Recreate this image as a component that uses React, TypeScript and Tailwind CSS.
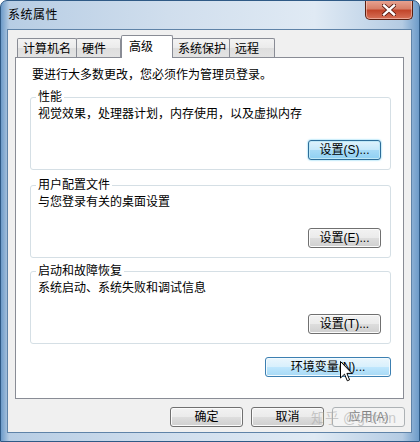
import type { ReactNode } from "react";

type BtnProps = {
  children: ReactNode;
  variant?: "normal" | "focus" | "hover" | "disabled";
  className?: string;
};

function Btn({ children, variant = "normal", className = "" }: BtnProps) {
  const styles = {
    normal:
      "border-[#707070] text-black bg-[linear-gradient(#f2f2f2_0%,#ebebeb_48%,#dddddd_52%,#cfcfcf_100%)] shadow-[inset_0_0_0_1px_#fbfbfb]",
    focus:
      "border-[#2c6d99] text-black bg-[linear-gradient(#dff2fc_0%,#c6e9fb_48%,#a6daf6_52%,#8fd0f3_100%)] shadow-[inset_0_0_0_1px_#bfe8f7,0_0_2px_#48c3f0]",
    hover:
      "border-[#3c7fb1] text-black bg-[linear-gradient(#eaf6fd_0%,#d9f0fc_48%,#bee6fd_52%,#a7d9f5_100%)] shadow-[inset_0_0_0_1px_#f2fafe]",
    disabled:
      "border-[#adb2b5] text-[#838383] bg-[#f4f4f4]",
  }[variant];
  return (
    <div
      className={`h-[20px] rounded-[3px] border flex items-center justify-center text-[12px] leading-none ${styles} ${className}`}
    >
      {children}
    </div>
  );
}

function Group({
  title,
  desc,
  button,
  className = "",
}: {
  title: string;
  desc: string;
  button: ReactNode;
  className?: string;
}) {
  return (
    <div
      className={`border border-[#d5dfe5] rounded-[3px] pl-[7px] pr-[9px] pb-[9px] flex flex-col ${className}`}
    >
      <span className="block w-fit -mt-[9px] -ml-[2px] px-[2px] bg-white leading-[16px]">
        {title}
      </span>
      <div className="leading-[16px] mt-px">{desc}</div>
      <div className="flex justify-end mt-[18px]">{button}</div>
    </div>
  );
}

const tabs = [
  { label: "计算机名", w: "w-[60px]" },
  { label: "硬件", w: "w-[45px]" },
  { label: "高级", w: "w-[52px]", active: true },
  { label: "系统保护", w: "w-[58px]" },
  { label: "远程", w: "w-[46px]" },
];

export default function App() {
  return (
    <div className="w-[420px] h-[442px] relative flex flex-col overflow-hidden rounded-t-[7px] border border-[#2f5a86] bg-[linear-gradient(90deg,#6d9bc9_0%,#b7cde4_2%,#d0deed_40%,#e0eaf4_75%,#b4cbe3_96%,#6d9bc9_100%)] font-['Liberation_Sans','Noto_Sans_CJK_SC',sans-serif] text-[12px] text-black">
      {/* title bar */}
      <div className="h-[28px] flex items-center pl-[7px] text-[12px] tracking-[0.5px]">
        系统属性
      </div>
      <div className="absolute -top-px right-[6px] w-[48px] h-[20px] rounded-b-[5px] border border-[#5b1f10] border-t-0 bg-[linear-gradient(#e9a695_0%,#d88069_45%,#c2462b_55%,#d77158_100%)] shadow-[inset_0_0_0_1px_rgba(255,220,210,0.5)] flex items-center justify-center">
        <svg width="14" height="12" viewBox="0 0 14 12">
          <path
            d="M2 1.5 L12 10.5 M12 1.5 L2 10.5"
            stroke="#5a1a10"
            strokeWidth="4.2"
            strokeLinecap="square"
          />
          <path
            d="M2 1.5 L12 10.5 M12 1.5 L2 10.5"
            stroke="#ffffff"
            strokeWidth="2.4"
            strokeLinecap="square"
          />
        </svg>
      </div>

      {/* client */}
      <div className="ml-[6px] mr-[7px] flex-1 border border-[#5f83a8] bg-[#f0f0f0] flex flex-col">
        <div className="pt-[5px] pl-[8px] flex items-end h-[27px]">
          {tabs.map((t) =>
            t.active ? (
              <div
                key={t.label}
                className={`${t.w} h-[23px] -mb-px relative z-10 border border-b-0 border-[#898c95] bg-white rounded-t-[2px] pl-[7px] pt-[3px] leading-[16px]`}
              >
                {t.label}
              </div>
            ) : (
              <div
                key={t.label}
                className={`${t.w} h-[19px] border border-b-0 border-[#898c95] -ml-px first:ml-px rounded-t-[2px] bg-[linear-gradient(#f3f3f3_0%,#ebebeb_50%,#dedede_52%,#e3e3e3_100%)] pl-[5px] pt-[2px] leading-[16px]`}
              >
                {t.label}
              </div>
            )
          )}
        </div>

        <div className="ml-[7px] mr-[7px] flex-1 border border-[#898c95] bg-white pt-[9px] pl-[14px] pr-[12px] flex flex-col">
          <div className="ml-[2px] leading-[16px]">
            要进行大多数更改，您必须作为管理员登录。
          </div>
          <Group
            className="mt-[14px]"
            title="性能"
            desc="视觉效果，处理器计划，内存使用，以及虚拟内存"
            button={
              <Btn variant="focus" className="w-[73px]">
                设置(S)...
              </Btn>
            }
          />
          <Group
            className="mt-[15px]"
            title="用户配置文件"
            desc="与您登录有关的桌面设置"
            button={<Btn className="w-[73px]">设置(E)...</Btn>}
          />
          <Group
            className="mt-[13px]"
            title="启动和故障恢复"
            desc="系统启动、系统失败和调试信息"
            button={<Btn className="w-[73px]">设置(T)...</Btn>}
          />
          <div className="flex justify-end mt-[13px]">
            <Btn variant="hover" className="w-[126px]">
              环境变量(N)...
            </Btn>
          </div>
        </div>

        <div className="mt-[8px] mb-[5px] mr-[6px] flex justify-end gap-[8px]">
          <Btn className="w-[73px]">确定</Btn>
          <Btn className="w-[73px]">取消</Btn>
          <Btn variant="disabled" className="w-[73px]">
            应用(A)
          </Btn>
        </div>
      </div>
      <div className="h-[8px]" />

      {/* mouse pointer */}
      <svg
        className="absolute left-[339px] top-[360px]"
        width="13"
        height="22"
        viewBox="0 0 13 22"
      >
        <path
          d="M0.5 0.5 L0.5 17 L4.5 13.2 L7.3 19.8 L9.6 18.8 L6.9 12.4 L12 12.4 Z"
          fill="#ffffff"
          stroke="#000000"
          strokeWidth="1"
          strokeLinejoin="miter"
        />
      </svg>

      {/* watermark */}
      <div className="absolute left-[310px] top-[409px] text-[14px] leading-[16px] text-[rgba(170,170,170,0.6)] whitespace-nowrap">
        知乎 @grthzn
      </div>
    </div>
  );
}
